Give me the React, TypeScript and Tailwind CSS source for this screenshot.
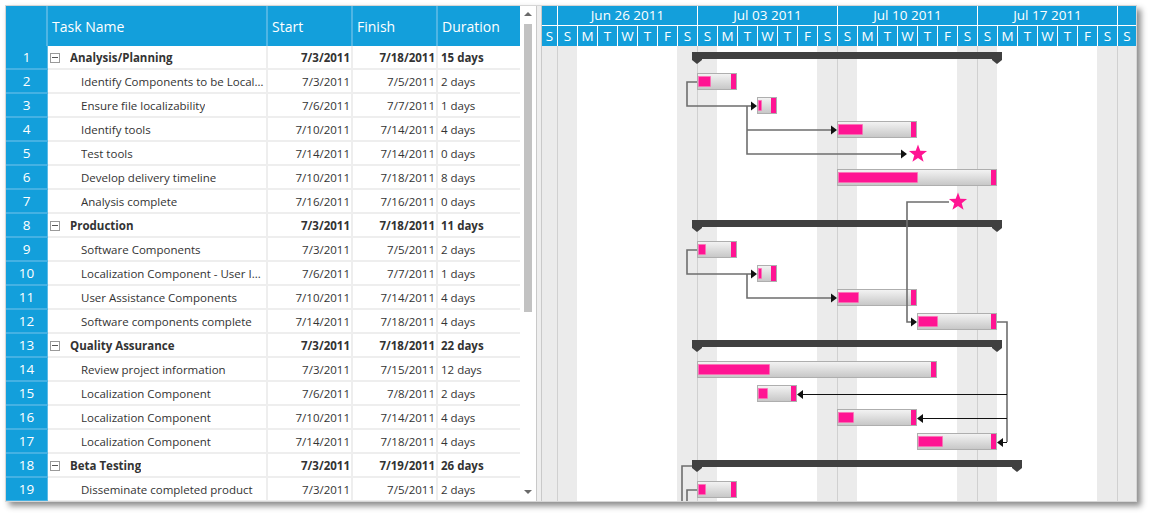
import React from "react";

type Task = { id: number; name: string; start: string; finish: string; dur: string; parent?: boolean };

const tasks: Task[] = [
  { id: 1, name: "Analysis/Planning", start: "7/3/2011", finish: "7/18/2011", dur: "15 days", parent: true },
  { id: 2, name: "Identify Components to be Locali...", start: "7/3/2011", finish: "7/5/2011", dur: "2 days" },
  { id: 3, name: "Ensure file localizability", start: "7/6/2011", finish: "7/7/2011", dur: "1 days" },
  { id: 4, name: "Identify tools", start: "7/10/2011", finish: "7/14/2011", dur: "4 days" },
  { id: 5, name: "Test tools", start: "7/14/2011", finish: "7/14/2011", dur: "0 days" },
  { id: 6, name: "Develop delivery timeline", start: "7/10/2011", finish: "7/18/2011", dur: "8 days" },
  { id: 7, name: "Analysis complete", start: "7/16/2011", finish: "7/16/2011", dur: "0 days" },
  { id: 8, name: "Production", start: "7/3/2011", finish: "7/18/2011", dur: "11 days", parent: true },
  { id: 9, name: "Software Components", start: "7/3/2011", finish: "7/5/2011", dur: "2 days" },
  { id: 10, name: "Localization Component - User I...", start: "7/6/2011", finish: "7/7/2011", dur: "1 days" },
  { id: 11, name: "User Assistance Components", start: "7/10/2011", finish: "7/14/2011", dur: "4 days" },
  { id: 12, name: "Software components complete", start: "7/14/2011", finish: "7/18/2011", dur: "4 days" },
  { id: 13, name: "Quality Assurance", start: "7/3/2011", finish: "7/18/2011", dur: "22 days", parent: true },
  { id: 14, name: "Review project information", start: "7/3/2011", finish: "7/15/2011", dur: "12 days" },
  { id: 15, name: "Localization Component", start: "7/6/2011", finish: "7/8/2011", dur: "2 days" },
  { id: 16, name: "Localization Component", start: "7/10/2011", finish: "7/14/2011", dur: "4 days" },
  { id: 17, name: "Localization Component", start: "7/14/2011", finish: "7/18/2011", dur: "4 days" },
  { id: 18, name: "Beta Testing", start: "7/3/2011", finish: "7/19/2011", dur: "26 days", parent: true },
  { id: 19, name: "Disseminate completed product", start: "7/3/2011", finish: "7/5/2011", dur: "2 days" },
];

// chart items: s = day offset from Jul 03, d = duration, p = progress px
type Item =
  | { row: number; kind: "sum"; s: number; d: number }
  | { row: number; kind: "bar"; s: number; d: number; p: number }
  | { row: number; kind: "ms"; s: number };

const items: Item[] = [
  { row: 1, kind: "sum", s: 0, d: 15 },
  { row: 2, kind: "bar", s: 0, d: 2, p: 12 },
  { row: 3, kind: "bar", s: 3, d: 1, p: 3 },
  { row: 4, kind: "bar", s: 7, d: 4, p: 24 },
  { row: 5, kind: "ms", s: 11 },
  { row: 6, kind: "bar", s: 7, d: 8, p: 79 },
  { row: 7, kind: "ms", s: 13 },
  { row: 8, kind: "sum", s: 0, d: 15 },
  { row: 9, kind: "bar", s: 0, d: 2, p: 7 },
  { row: 10, kind: "bar", s: 3, d: 1, p: 3 },
  { row: 11, kind: "bar", s: 7, d: 4, p: 20 },
  { row: 12, kind: "bar", s: 11, d: 4, p: 19 },
  { row: 13, kind: "sum", s: 0, d: 15 },
  { row: 14, kind: "bar", s: 0, d: 12, p: 71 },
  { row: 15, kind: "bar", s: 3, d: 2, p: 9 },
  { row: 16, kind: "bar", s: 7, d: 4, p: 15 },
  { row: 17, kind: "bar", s: 11, d: 4, p: 24 },
  { row: 18, kind: "sum", s: 0, d: 16 },
  { row: 19, kind: "bar", s: 0, d: 2, p: 7 },
];

const rowTop = (r: number) => 46 + (r - 1) * 24;
const dayX = (s: number) => 697 + s * 20;

function starPoints(cx: number, cy: number, R = 9.5, r = 3.9) {
  const pts: string[] = [];
  for (let i = 0; i < 10; i++) {
    const a = -Math.PI / 2 + (i * Math.PI) / 5;
    const rad = i % 2 === 0 ? R : r;
    pts.push(`${(cx + rad * Math.cos(a)).toFixed(2)},${(cy + rad * Math.sin(a)).toFixed(2)}`);
  }
  return pts.join(" ");
}

const arrowR = (tx: number, ty: number) => `${tx - 6},${ty - 4.5} ${tx},${ty} ${tx - 6},${ty + 4.5}`;
const arrowL = (tx: number, ty: number) => `${tx + 6},${ty - 4.5} ${tx},${ty} ${tx + 6},${ty + 4.5}`;

function ChartBody() {
  const weekend = [0, 1, 7, 8, 14, 15, 21, 22, 28, 29];
  const weekLines = [557, 697, 837, 977, 1117];
  return (
    <svg width={594} height={455} viewBox="542 46 594 455" className="block">
      <defs>
        <linearGradient id="barg" x1="0" y1="0" x2="0" y2="1">
          <stop offset="0" stopColor="#F4F4F4" />
          <stop offset="1" stopColor="#C6C6C6" />
        </linearGradient>
      </defs>
      {weekend.map((d) => (
        <rect key={d} x={537 + d * 20} y={46} width={20} height={455} fill="#EBEBEB" />
      ))}
      {weekLines.map((x) => (
        <line key={x} x1={x + 0.5} y1={46} x2={x + 0.5} y2={501} stroke="#D0D0D0" />
      ))}

      {items.map((it) => {
        const top = rowTop(it.row);
        if (it.kind === "sum") {
          const x = dayX(it.s);
          const e = dayX(it.s + it.d);
          const b = top + 13;
          return (
            <g key={it.row} fill="#404040">
              <rect x={x - 5} y={top + 6} width={e - x + 10} height={7} />
              <polygon points={`${x - 5},${b} ${x + 5},${b} ${x + 5},${b + 1} ${x},${b + 5} ${x - 5},${b + 1}`} />
              <polygon points={`${e - 5},${b} ${e + 5},${b} ${e + 5},${b + 1} ${e},${b + 5} ${e - 5},${b + 1}`} />
            </g>
          );
        }
        if (it.kind === "ms") {
          return <polygon key={it.row} points={starPoints(dayX(it.s) + 1, top + 12)} fill="#FF1493" />;
        }
        const x = dayX(it.s);
        const w = it.d * 20;
        return (
          <g key={it.row}>
            <rect x={x + 0.5} y={top + 3.5} width={w - 1} height={16} fill="url(#barg)" stroke="#AEAEAE" />
            <rect x={x + 1.5} y={top + 6.5} width={it.p} height={10} fill="#FF1493" stroke="#FF6EB4" strokeWidth={0.6} />
            <rect x={x + w - 6} y={top + 4} width={5} height={15} fill="#FF1493" />
          </g>
        );
      })}

      {/* dependency lines */}
      <g fill="none" stroke="#6E6E6E" strokeWidth={1.6}>
        <path d="M697 82 H687 V106 H751" />
        <path d="M747 106 V154 H901 M747 130 H831" />
        <path d="M949 202 H907 V322 H911" />
        <path d="M697 250 H687 V274 H751" />
        <path d="M747 274 V298 H831" />
        <path d="M997 322 H1007 V442" />
        <path d="M692 466 H682 V502 M697 490 H687 V502" />
      </g>
      <g fill="none" stroke="#111" strokeWidth={1}>
        <path d="M1007 394.5 H803 M1007 418.5 H923 M1007 442.5 H1003" />
      </g>
      <g fill="#111">
        <polygon points={arrowR(757, 106)} />
        <polygon points={arrowR(837, 130)} />
        <polygon points={arrowR(907, 154)} />
        <polygon points={arrowR(917, 322)} />
        <polygon points={arrowR(757, 274)} />
        <polygon points={arrowR(837, 298)} />
        <polygon points={arrowL(797, 394.5)} />
        <polygon points={arrowL(917, 418.5)} />
        <polygon points={arrowL(997, 442.5)} />
      </g>
    </svg>
  );
}

function ChartHeader() {
  const months = ["Jun 26 2011", "Jul 03 2011", "Jul 10 2011", "Jul 17 2011"];
  const week = ["S", "M", "T", "W", "T", "F", "S"];
  const days = [...week, ...week, ...week, ...week];
  return (
    <div className="bg-[#139FDB] text-white text-[13.5px]">
      <div className="flex h-[20px] border-b border-white">
        <div className="w-[15px]" />
        {months.map((m) => (
          <div key={m} className="w-[140px] border-l border-white flex items-center justify-center">
            {m}
          </div>
        ))}
        <div className="w-[19px] border-l border-white" />
      </div>
      <div className="flex h-[20px]">
        <div className="w-[15px] flex items-center justify-center">S</div>
        {days.map((d, i) => (
          <div key={i} className="w-[20px] border-l border-white flex items-center justify-center">
            {d}
          </div>
        ))}
        <div className="w-[19px] border-l border-white flex items-center justify-center">S</div>
      </div>
    </div>
  );
}

function GridRow({ t }: { t: Task }) {
  const cell = "h-full border-r-2 border-[#EEEEEE] flex items-center pt-[1px]";
  return (
    <div className="flex h-[24px]">
      <div className="w-[42px] h-full bg-[#139FDB] border-b-2 border-[#45B1E3] border-r border-r-[#5DBCE7] flex items-center justify-center pt-[1px] text-white text-[13.5px]">
        {t.id}
      </div>
      <div className="flex flex-1 h-full border-b-2 border-[#EEEEEE] text-[#333] text-[11.5px]">
        <div className={`${cell} w-[220px] ${t.parent ? "pl-[2px]" : "pl-[33px]"}`}>
          {t.parent && (
            <span className="w-[10px] h-[10px] border border-[#9A9A9A] bg-white flex items-center justify-center mr-[10px] shrink-0">
              <span className="w-[6px] h-px bg-[#555]" />
            </span>
          )}
          <span className={`truncate ${t.parent ? "font-bold" : ""}`}>{t.name}</span>
        </div>
        <div className={`${cell} w-[85px] justify-end pr-[1px] ${t.parent ? "font-bold" : ""}`}>{t.start}</div>
        <div className={`${cell} w-[85px] justify-end pr-[1px] ${t.parent ? "font-bold" : ""}`}>{t.finish}</div>
        <div className={`h-full flex items-center pt-[1px] w-[82px] pl-[3px] ${t.parent ? "font-bold" : ""}`}>{t.dur}</div>
      </div>
    </div>
  );
}

export default function App() {
  return (
    <div className="w-[1151px] h-[516px] bg-white font-['Open_Sans',sans-serif] pt-[5px] pl-[5px]">
      <div className="w-[1132px] h-[497px] border border-[#D6D6D6] flex overflow-hidden shadow-[4px_4px_6px_rgba(0,0,0,0.45)]">
        {/* grid */}
        <div className="w-[514px] flex flex-col">
          <div className="h-[40px] flex bg-[#139FDB] text-white text-[14px] shrink-0">
            <div className="w-[42px] border-r-2 border-[#4FB5E4]" />
            <div className="w-[220px] border-r-2 border-[#4FB5E4] flex items-center pl-[4px]">Task Name</div>
            <div className="w-[85px] border-r-2 border-[#4FB5E4] flex items-center pl-[4px]">Start</div>
            <div className="w-[85px] border-r-2 border-[#4FB5E4] flex items-center pl-[4px]">Finish</div>
            <div className="w-[82px] flex items-center pl-[4px]">Duration</div>
          </div>
          <div className="flex-1 overflow-hidden">
            {tasks.map((t) => (
              <GridRow key={t.id} t={t} />
            ))}
          </div>
        </div>
        {/* scrollbar */}
        <div className="w-[16px] flex flex-col items-center pt-[6px] pb-[7px]">
          <div className="w-0 h-0 border-l-[4px] border-r-[4px] border-b-[4px] border-l-transparent border-r-transparent border-b-[#6A6A6A]" />
          <div className="w-[8px] h-[288px] mt-[8px] bg-[#C2C2C2]" />
          <div className="flex-1" />
          <div className="w-0 h-0 border-l-[4px] border-r-[4px] border-t-[4px] border-l-transparent border-r-transparent border-t-[#6A6A6A]" />
        </div>
        {/* splitter */}
        <div className="w-[6px] border-l border-r border-[#C9C9C9] bg-[#EEEEEE]" />
        {/* chart */}
        <div className="w-[594px] flex flex-col">
          <ChartHeader />
          <ChartBody />
        </div>
      </div>
    </div>
  );
}
